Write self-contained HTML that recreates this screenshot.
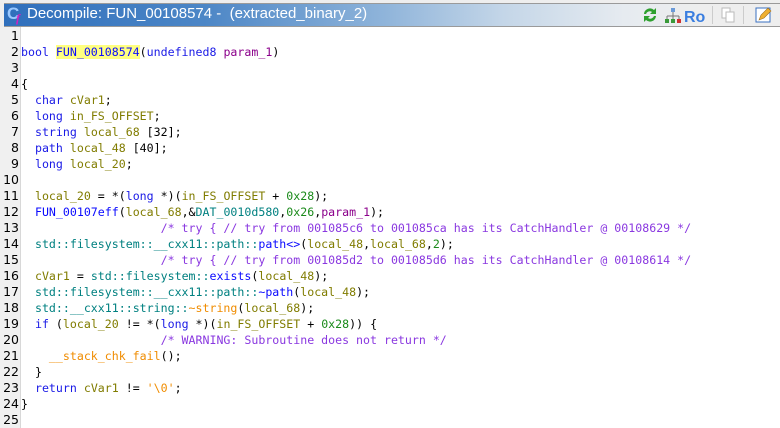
<!DOCTYPE html>
<html><head><style>
body{margin:0;width:780px;height:428px;overflow:hidden;background:#fff;position:relative;font-family:"DejaVu Sans Mono",monospace}
#top{position:absolute;left:0;top:0;width:780px;height:27px;background:#eeeeee}
#bar{position:absolute;left:4px;top:3px;width:776px;height:22px;border-top:1px solid #9a9a9a;border-bottom:1px solid #9a9a9a;background:linear-gradient(90deg,#2f6fbc 0px,#4c86c6 200px,#8fb4da 380px,#c4d6e8 500px,#e6ebf0 620px,#eeeeee 700px)}
#title{position:absolute;left:27px;top:4px;font:15px "Liberation Sans",sans-serif;color:#fff;line-height:20px;white-space:pre}
#gut{position:absolute;left:0;top:27px;width:20px;height:401px;background:#f0f0f0;border-right:1px solid #d8d8d8}
#code{position:absolute;left:21px;top:28px;font-size:11.6px;line-height:16px;white-space:pre;color:#000}
.k{color:#1a1ae6}.v{color:#807c00}.f{color:#0a0aff}.n{color:#008080}.p{color:#8b008b}.c{color:#8a38e0}.g{color:#1a8a1a}.o{color:#f08c00}
.hl{background:#ffff80}
</style></head><body>
<div id="top"></div>
<div id="bar"></div>
<div style="position:absolute;left:7px;top:4px;font:bold 17px/20px 'Liberation Sans',sans-serif;color:#9ac8ff">C</div>
<div style="position:absolute;left:16px;top:11px;font:italic bold 12px/14px 'Liberation Serif',serif;color:#d020c0">f</div>
<div id="title">Decompile: FUN_00108574 -  (extracted_binary_2)</div>
<svg style="position:absolute;left:640px;top:5px" width="140" height="20">
<path d="M4 9a6 6 0 0 1 10-4l2-2v6h-6l2-2a4 4 0 0 0-6 2z" fill="#2ea02e"/>
<path d="M16 11a6 6 0 0 1-10 4l-2 2v-6h6l-2 2a4 4 0 0 0 6-2z" fill="#2ea02e"/>
<rect x="31" y="3" width="4" height="4" fill="#6a9ad8"/><path d="M33 7v4M27 11h12M27 11v3M33 11v3M39 11v3" stroke="#777" fill="none"/>
<rect x="25" y="14" width="4" height="4" fill="#3a9a3a"/><rect x="31" y="14" width="4" height="4" fill="#3a9a3a"/><rect x="37" y="14" width="4" height="4" fill="#d03030"/>
<text x="44" y="17" font-family="Liberation Sans" font-weight="bold" font-size="16" fill="#3a7ee0">Ro</text>
<line x1="72.5" y1="1" x2="72.5" y2="19" stroke="#ccc"/>
<rect x="82" y="3" width="8" height="10" fill="#fff" stroke="#bbb"/><rect x="86" y="7" width="8" height="10" fill="#fff" stroke="#bbb"/>
<line x1="103.5" y1="1" x2="103.5" y2="19" stroke="#ccc"/>
<rect x="116" y="3" width="14" height="14" fill="#fff" stroke="#3a70c0"/><path d="M119 15l2-5 7-7 3 3-7 7z" fill="#f0b030" stroke="#a07020" stroke-width=".6"/>
</svg>
<div id="gut"></div>
<div style="position:absolute;left:0;top:28px;width:19px;text-align:right;font:12.5px/16px 'DejaVu Sans',sans-serif;color:#000;white-space:pre">1
2
3
4
5
6
7
8
9
10
11
12
13
14
15
16
17
18
19
20
21
22
23
24
25</div>
<div id="code">
<span class="k">bool</span> <span class="f hl">FUN_00108574</span>(<span class="k">undefined8</span> <span class="p">param_1</span>)

{
  <span class="k">char</span> <span class="v">cVar1</span>;
  <span class="k">long</span> <span class="v">in_FS_OFFSET</span>;
  <span class="k">string</span> <span class="v">local_68</span> [32];
  <span class="k">path</span> <span class="v">local_48</span> [40];
  <span class="k">long</span> <span class="v">local_20</span>;
  
  <span class="v">local_20</span> = *(<span class="k">long</span> *)(<span class="v">in_FS_OFFSET</span> + <span class="g">0x28</span>);
  <span class="f">FUN_00107eff</span>(<span class="v">local_68</span>,&amp;<span class="n">DAT_0010d580</span>,<span class="g">0x26</span>,<span class="p">param_1</span>);
                    <span class="c">/* try { // try from 001085c6 to 001085ca has its CatchHandler @ 00108629 */</span>
  <span class="n">std::filesystem::__cxx11::path::</span><span class="f">path&lt;&gt;</span>(<span class="v">local_48</span>,<span class="v">local_68</span>,<span class="g">2</span>);
                    <span class="c">/* try { // try from 001085d2 to 001085d6 has its CatchHandler @ 00108614 */</span>
  <span class="v">cVar1</span> = <span class="n">std::filesystem::</span><span class="f">exists</span>(<span class="v">local_48</span>);
  <span class="n">std::filesystem::__cxx11::path::</span><span class="f">~path</span>(<span class="v">local_48</span>);
  <span class="n">std::__cxx11::string::</span><span class="o">~string</span>(<span class="v">local_68</span>);
  <span class="k">if</span> (<span class="v">local_20</span> != *(<span class="k">long</span> *)(<span class="v">in_FS_OFFSET</span> + <span class="g">0x28</span>)) {
                    <span class="c">/* WARNING: Subroutine does not return */</span>
    <span class="o">__stack_chk_fail</span>();
  }
  <span class="k">return</span> <span class="v">cVar1</span> != <span class="o">'\0'</span>;
}
</div>
</body></html>
